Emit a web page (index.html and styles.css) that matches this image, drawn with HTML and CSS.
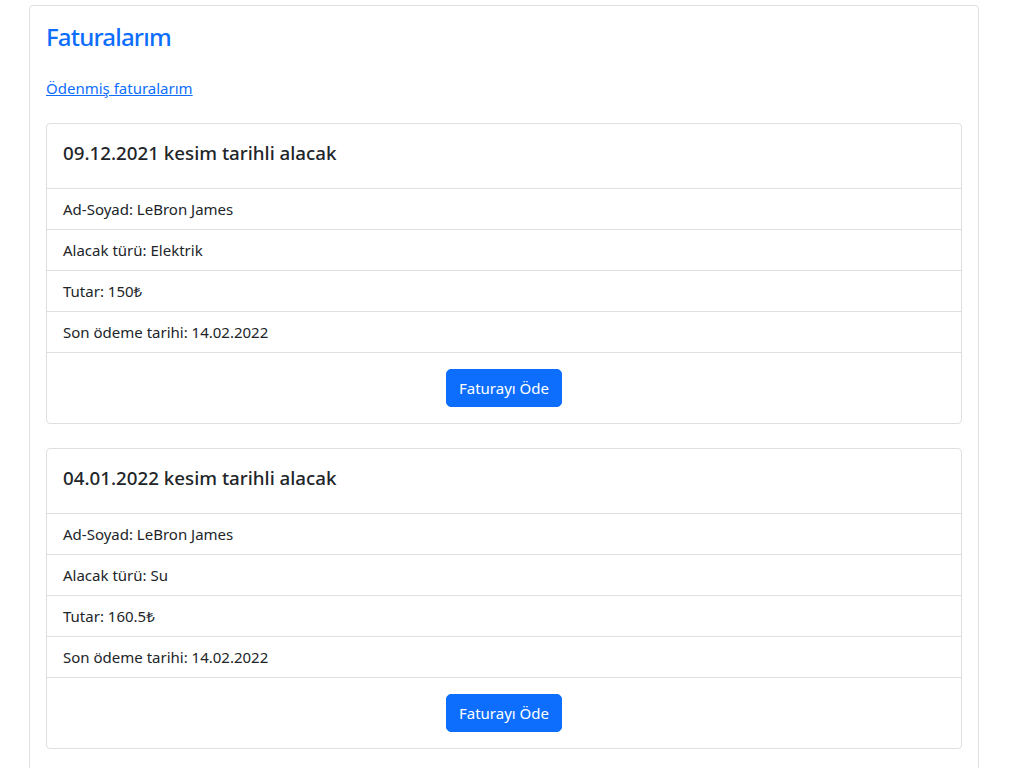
FILE: index.html
```html
<!DOCTYPE html>
<html lang="tr">
<head>
<meta charset="utf-8">
<title>Faturalarım</title>
<link rel="stylesheet" href="styles.css">
</head>
<body>
<div class="container">
  <div class="card outer">
    <div class="card-body">
      <h3 class="page-title">Faturalarım</h3>
      <p class="paid-link"><a href="#">Ödenmiş faturalarım</a></p>

      <div class="card bill">
        <div class="card-body head">
          <h5 class="card-title">09.12.2021 kesim tarihli alacak</h5>
        </div>
        <ul class="list-group">
          <li class="list-item">Ad-Soyad: LeBron James</li>
          <li class="list-item">Alacak türü: Elektrik</li>
          <li class="list-item">Tutar: 150₺</li>
          <li class="list-item">Son ödeme tarihi: 14.02.2022</li>
        </ul>
        <div class="card-body actions">
          <button class="btn">Faturayı Öde</button>
        </div>
      </div>

      <div class="card bill">
        <div class="card-body head">
          <h5 class="card-title">04.01.2022 kesim tarihli alacak</h5>
        </div>
        <ul class="list-group">
          <li class="list-item">Ad-Soyad: LeBron James</li>
          <li class="list-item">Alacak türü: Su</li>
          <li class="list-item">Tutar: 160.5₺</li>
          <li class="list-item">Son ödeme tarihi: 14.02.2022</li>
        </ul>
        <div class="card-body actions">
          <button class="btn">Faturayı Öde</button>
        </div>
      </div>
    </div>
  </div>
</div>
</body>
</html>
```

FILE: styles.css
```css
* { box-sizing: border-box; }
html, body { margin: 0; padding: 0; background: #fff; }
body {
  font-family: "Noto Sans", "Segoe UI", sans-serif;
  font-size: 15px;
  line-height: 24px;
  color: #212529;
}
.container {
  width: 950px;
  margin: 5px 0 0 29px;
}
.card {
  border: 1px solid #dfdfdf;
  border-radius: 4px;
  background: #fff;
}
.card-body { padding: 16px; }
.outer > .card-body { padding-bottom: 0; }
.page-title {
  margin: 1px 0 25px;
  font-size: 24px;
  font-weight: 500;
  letter-spacing: -0.8px;
  line-height: 28px;
  color: #0d6efd;
}
.paid-link { margin: 0 0 23px; }
.paid-link a { color: #0d6efd; text-decoration: underline; }
.bill { margin-bottom: 24px; }
.card-title {
  margin: 1px 0 7px;
  font-size: 18.75px;
  font-weight: 500;
  line-height: 24px;
}
.list-group { list-style: none; margin: 0; padding: 0; }
.list-item {
  padding: 8px 16px;
  border-top: 1px solid #dfdfdf;
}
.actions {
  border-top: 1px solid #dfdfdf;
  display: flex;
  justify-content: center;
}
.btn {
  font: inherit;
  color: #fff;
  background: #0d6efd;
  border: 1px solid #0d6efd;
  border-radius: 5px;
  padding: 6px 12px;
  line-height: 24px;
  cursor: pointer;
}
```
